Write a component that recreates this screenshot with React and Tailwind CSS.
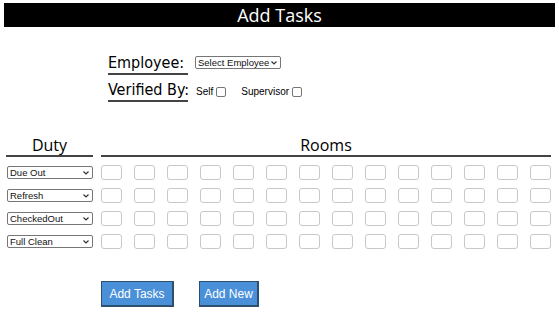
import { useState } from 'react'

const duties = ['Due Out', 'Refresh', 'CheckedOut', 'Full Clean']
const rooms = Array.from({ length: 14 }, (_, i) => i)

function Chevron() {
  return (
    <svg
      className="pointer-events-none absolute right-[4px] top-1/2 -translate-y-1/2"
      width="6"
      height="4"
      viewBox="0 0 6 4"
    >
      <path d="M0.5 0.5 L3 3 L5.5 0.5" fill="none" stroke="#333" strokeWidth="1.2" />
    </svg>
  )
}

function Select({ className, children, ...props }) {
  return (
    <div className={`relative ${className}`}>
      <select
        {...props}
        className="block w-full h-full appearance-none bg-white border border-[#767676] rounded-[2px] text-[9.5px] leading-[11px] font-['Liberation_Sans',sans-serif] pl-[2px] pr-[10px] py-0 text-[#111]"
      >
        {children}
      </select>
      <Chevron />
    </div>
  )
}

export default function App() {
  const [employee, setEmployee] = useState('')

  return (
    <div className="w-[559px] h-[317px] bg-white font-['Open_Sans',sans-serif] text-black overflow-hidden">
      {/* Title bar */}
      <div className="mx-[4px] mt-[3px] h-[24px] bg-black text-white text-center text-[18px] leading-[24px]">
        Add Tasks
      </div>

      {/* Employee / verification */}
      <div className="ml-[108px] mt-[26px] font-['DejaVu_Sans_Condensed','Roboto',sans-serif]">
        <div className="flex items-end h-[22px]">
          <span className="w-[80px] whitespace-nowrap border-b-2 border-[#444] text-[16px] leading-[20px]">Employee:</span>
          <Select
            value={employee}
            onChange={(e) => setEmployee(e.target.value)}
            className="ml-[7px] mb-[6px] h-[13px] w-[86px]"
          >
            <option value="">Select Employee</option>
          </Select>
        </div>
        <div className="flex items-end h-[22px] mt-[5px]">
          <span className="w-[80px] whitespace-nowrap border-b-2 border-[#444] text-[16px] leading-[20px]">Verified By:</span>
          <label className="ml-[8px] mb-[3px] flex items-center text-[10px] font-['Liberation_Sans',sans-serif]">
            Self
            <span className="ml-[3px] w-[10px] h-[10px] border border-[#767676] rounded-[2px] bg-white inline-block" />
          </label>
          <label className="ml-[15px] mb-[3px] flex items-center text-[10px] font-['Liberation_Sans',sans-serif]">
            Supervisor
            <span className="ml-[3px] w-[10px] h-[10px] border border-[#767676] rounded-[2px] bg-white inline-block" />
          </label>
        </div>
      </div>

      {/* Duty / rooms grid */}
      <div className="ml-[6px] mt-[34px] w-[545px]">
        <div className="flex">
          <div className="w-[87px] text-center text-[16px] leading-[19px] border-b-2 border-[#444]">Duty</div>
          <div className="ml-[8px] flex-1 text-center text-[16px] leading-[19px] border-b-2 border-[#444]">Rooms</div>
        </div>
        <div className="mt-[8px] flex flex-col gap-[8px]">
          {duties.map((d) => (
            <div key={d} className="flex items-center h-[15px]">
              <Select defaultValue={d} className="w-[86px] h-[13px] ml-[1px]">
                {duties.map((o) => (
                  <option key={o}>{o}</option>
                ))}
              </Select>
              <div className="ml-[8px] flex-1 flex justify-between">
                {rooms.map((r) => (
                  <input
                    key={r}
                    type="text"
                    className="w-[21px] h-[15px] border border-[#c8c8c8] rounded-[3px] bg-white"
                  />
                ))}
              </div>
            </div>
          ))}
        </div>
      </div>

      {/* Actions */}
      <div className="ml-[101px] mt-[32px] flex gap-[25px]">
        <button className="w-[73px] h-[26px] bg-[#4a90d9] border border-[#2f4f6f] border-r-2 border-b-2 text-white text-[12px] font-['Liberation_Sans',sans-serif]">
          Add Tasks
        </button>
        <button className="w-[60px] h-[26px] bg-[#4a90d9] border border-[#2f4f6f] border-r-2 border-b-2 text-white text-[12px] font-['Liberation_Sans',sans-serif]">
          Add New
        </button>
      </div>
    </div>
  )
}
